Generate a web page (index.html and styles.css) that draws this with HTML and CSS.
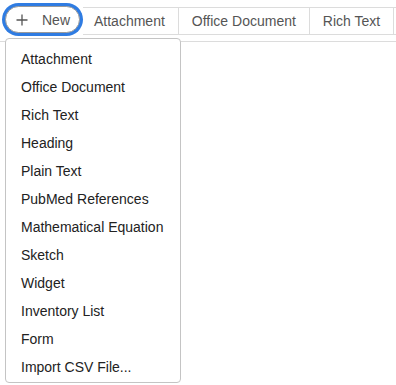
FILE: index.html
```html
<!DOCTYPE html>
<html>
<head>
<meta charset="utf-8">
<link rel="stylesheet" href="styles.css">
</head>
<body>
<div class="page">
  <div class="toolbar">
    <button class="new-btn">
      <svg class="plus" width="12" height="12" viewBox="0 0 12 12"><path d="M6 0.5V11.5M0.5 6H11.5" stroke="#555" stroke-width="1.3" fill="none"/></svg>
      <span>New</span>
    </button>
    <div class="tabs">
      <div class="tab">Attachment</div>
      <div class="tab">Office Document</div>
      <div class="tab">Rich Text</div>
    </div>
  </div>
  <div class="content"></div>
  <ul class="menu">
    <li>Attachment</li>
    <li>Office Document</li>
    <li>Rich Text</li>
    <li>Heading</li>
    <li>Plain Text</li>
    <li>PubMed References</li>
    <li>Mathematical Equation</li>
    <li>Sketch</li>
    <li>Widget</li>
    <li>Inventory List</li>
    <li>Form</li>
    <li>Import CSV File...</li>
  </ul>
</div>
</body>
</html>
```

FILE: styles.css
```css
html, body {
  margin: 0;
  padding: 0;
  background: #fff;
}
body {
  font-family: "Liberation Sans", Arial, sans-serif;
  font-size: 14px;
  width: 396px;
  height: 385px;
  overflow: hidden;
}
.page {
  position: relative;
  height: 385px;
}
.toolbar {
  display: flex;
  align-items: flex-start;
  height: 41px;
  box-sizing: border-box;
  padding: 6px 0 0 5px;
}
.new-btn {
  display: flex;
  align-items: center;
  box-sizing: border-box;
  width: 75px;
  height: 27px;
  padding: 0 0 0 10px;
  margin: 0 3px 0 0;
  border: 1px solid #9a9a9a;
  border-radius: 14px;
  background: #fff;
  box-shadow: 0 0 0 3px #2f7ce2;
  font-family: "Liberation Sans", Arial, sans-serif;
  font-size: 14px;
  color: #555;
  flex: none;
}
.plus {
  display: block;
  flex: none;
}
.new-btn span {
  margin-left: 14px;
}
.tabs {
  display: flex;
  flex: 1;
  min-width: 0;
  overflow: hidden;
  margin-top: 1px;
  height: 28px;
  box-sizing: border-box;
  border-top: 1px solid #dcdcdc;
  border-bottom: 1px solid #dcdcdc;
}
.tab {
  flex: none;
  padding: 0 13px;
  line-height: 26px;
  color: #555;
  border-right: 1px solid #dcdcdc;
  white-space: nowrap;
}
.tab:first-child {
  padding-left: 11px;
}
.content {
  border-top: 1px solid #dcdcdc;
  height: 343px;
}
.menu {
  position: absolute;
  top: 38px;
  left: 5px;
  width: 176px;
  box-sizing: border-box;
  margin: 0;
  padding: 6px 0 1px;
  list-style: none;
  background: #fff;
  border: 1px solid #c4c4c4;
  border-radius: 4px;
}
.menu li {
  padding-left: 15px;
  line-height: 28px;
  height: 28px;
  color: #222;
  white-space: nowrap;
}
```
